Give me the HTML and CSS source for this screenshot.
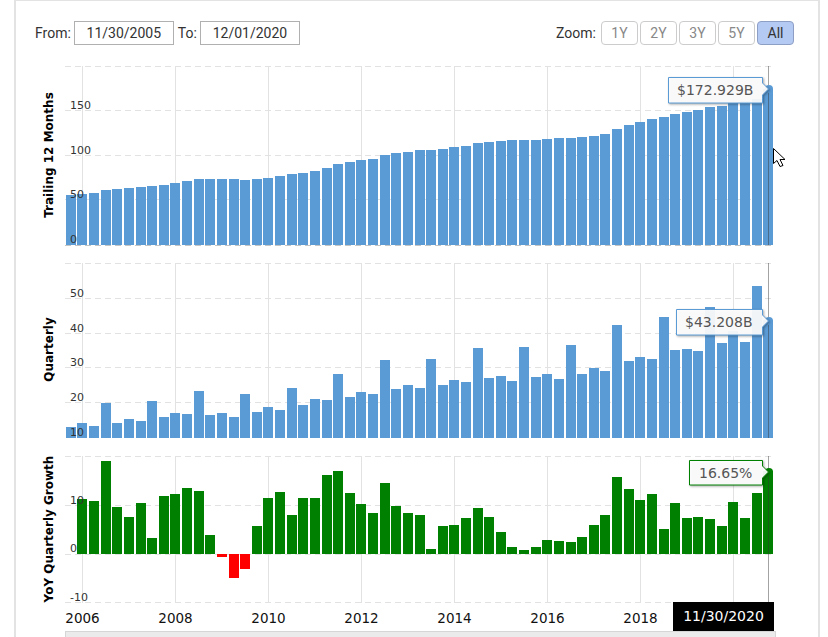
FILE: index.html
```html
<!DOCTYPE html>
<html>
<head>
    <meta charset="UTF-8">
    <title>Revenue Chart</title>
    <link rel="stylesheet" href="styles.css">
</head>
<body>
    <div class="card">
        <div class="toolbar">
            <div class="range">
                <label class="range-label">From:</label>
                <input class="range-input" type="text" value="11/30/2005">
                <label class="range-label">To:</label>
                <input class="range-input" type="text" value="12/01/2020">
            </div>
            <div class="zoom">
                <span class="zoom-label">Zoom:</span>
                <button class="zoom-btn">1Y</button>
                <button class="zoom-btn">2Y</button>
                <button class="zoom-btn">3Y</button>
                <button class="zoom-btn">5Y</button>
                <button class="zoom-btn active">All</button>
            </div>
        </div>
        <!-- viewBox uses page coordinates so the numbers read off the chart stay simple -->
        <svg id="chart" class="chart" viewBox="30 60 770 577" width="770" height="577"></svg>
    </div>
    <script src="chart.js"></script>
</body>
</html>
```

FILE: styles.css
```css
* {
    box-sizing: border-box;
}
body {
    margin: 0;
    background-color: #fff;
    font-family: Roboto, Arial, sans-serif;
    overflow: hidden;
}
.card {
    width: 806px;
    height: 637px;
    margin-left: 14px;
    padding: 20px 24px 0 19px;
    border: 1px solid #e3e3e3;
    border-width: 1px 2px 0 2px;
}
.toolbar {
    display: flex;
    justify-content: space-between;
    align-items: center;
    height: 24px;
    margin-bottom: 15px;
}
.range {
    display: flex;
    align-items: center;
}
.range-label {
    font-size: 14px;
    color: #333;
    margin-right: 3px;
}
.range-input {
    width: 100px;
    height: 24px;
    margin-right: 4px;
    padding: 0;
    border: 1px solid #b0b0b0;
    font-family: Roboto, Arial, sans-serif;
    font-size: 14px;
    color: #333;
    text-align: center;
}
.zoom {
    display: flex;
    align-items: center;
    gap: 2px;
}
.zoom-label {
    font-size: 14px;
    color: #333;
    margin-right: 3px;
}
.zoom-btn {
    width: 37px;
    height: 24px;
    padding: 0;
    border: 1px solid #ccc;
    border-radius: 4px;
    background-color: #fff;
    font-family: Roboto, Arial, sans-serif;
    font-size: 14px;
    color: #888;
}
.zoom-btn.active {
    background-color: #b5caf2;
    border-color: #8e9fc6;
    color: #333;
}
.chart {
    display: block;
    margin-left: -5px;
}

/* chart parts */
.grid-h {
    stroke: #e2e2e2;
    stroke-width: 1;
    stroke-dasharray: 6 4;
}
.grid-v {
    stroke: #e2e2e2;
    stroke-width: 1;
}
.baseline {
    stroke: #555;
    stroke-opacity: 0.35;
    stroke-width: 1;
    stroke-dasharray: 6 4;
}
.bar-blue, .marker-blue {
    fill: #5b9bd5;
}
.bar-green, .marker-green {
    fill: #008000;
}
.bar-red {
    fill: #f00;
}
.crosshair {
    stroke: #333;
    stroke-opacity: 0.45;
    stroke-width: 1;
}
.tick {
    font-family: "DejaVu Sans", sans-serif;
    font-size: 11px;
    fill: #333;
}
.axis-title {
    font-family: "DejaVu Sans", sans-serif;
    font-size: 12px;
    font-weight: bold;
    fill: #000;
    text-anchor: middle;
}
.year {
    font-family: "DejaVu Sans", sans-serif;
    font-size: 13.5px;
    fill: #111;
    text-anchor: middle;
}
.tip {
    fill: rgba(255, 255, 255, 0.93);
    stroke-width: 1;
    filter: drop-shadow(1px 1px 1px rgba(0, 0, 0, 0.35));
}
.tip-blue {
    stroke: #5b9bd5;
}
.tip-green {
    stroke: #008000;
}
.tip-text {
    font-family: "DejaVu Sans", sans-serif;
    font-size: 14px;
    fill: #555;
}
.date-box {
    fill: #000;
}
.date-text {
    font-family: "DejaVu Sans", sans-serif;
    font-size: 14px;
    fill: #fff;
    text-anchor: middle;
}
.navigator {
    fill: #ebebeb;
    stroke: #d6d6d6;
    stroke-width: 1;
}
.cursor {
    fill: #fff;
    stroke: #000;
    stroke-width: 1;
    stroke-linejoin: miter;
}
```

FILE: chart.js
```js
// left edge of every quarter's bar, shared by all three panels
var barX = [66, 77, 89, 101, 112, 124, 136, 147, 159, 170, 182, 194, 205, 217, 229, 240, 252, 263, 275, 287,
    298, 310, 322, 333, 345, 356, 368, 380, 391, 403, 415, 426, 438, 449, 461, 473, 484, 496, 507, 519,
    531, 542, 554, 566, 577, 589, 600, 612, 624, 635, 647, 659, 670, 682, 693, 705, 717, 728, 740, 752, 763];

// y of each bar's top
var trailing = [195, 194, 193, 190, 189, 188, 187, 186, 185, 183, 181, 179, 179, 179, 179, 180, 179, 178, 176, 174,
    173, 171, 168, 164, 162, 160, 159, 155, 153, 152, 150, 150, 149, 147, 146, 143, 142, 141, 140, 140,
    140, 139, 138, 138, 137, 136, 134, 129, 125, 122, 119, 117, 114, 112, 110, 107, 106, 103, 101, 99, 89];

var quarterly = [427, 423, 426, 403, 423, 419, 421, 401, 417, 413, 414, 391, 415, 413, 417, 394, 412, 407, 410, 388,
    405, 399, 400, 374, 397, 392, 394, 360, 389, 385, 388, 359, 385, 380, 382, 348, 378, 376, 381, 347,
    377, 374, 379, 345, 374, 368, 371, 325, 361, 357, 359, 317, 350, 349, 351, 307, 343, 331, 342, 286, 320];

// first quarter has no growth figure
var growth = [null, 499, 501, 461, 507, 517, 503, 538, 496, 494, 488, 491, 535, 557, 578, 569, 526, 498, 492, 515,
    498, 498, 475, 471, 493, 504, 513, 483, 506, 513, 515, 549, 526, 525, 518, 508, 517, 532, 547, 550,
    547, 540, 541, 542, 537, 525, 515, 477, 489, 500, 494, 529, 503, 518, 517, 519, 526, 502, 518, 493, 471];

var svg = document.getElementById('chart');
var yearLines = [82.5, 175.5, 268.5, 361.5, 454.5, 547.5, 640.5, 733.5];

function add(tag, attrs, text) {
    var el = document.createElementNS('http://www.w3.org/2000/svg', tag);
    for (var key in attrs) {
        el.setAttribute(key, attrs[key]);
    }
    if (text) {
        el.textContent = text;
    }
    svg.appendChild(el);
    return el;
}

function drawPanel(panel) {
    panel.grid.forEach(function(y) {
        add('line', { x1: 65, x2: 775, y1: y, y2: y, class: 'grid-h' });
    });
    yearLines.forEach(function(x) {
        add('line', { x1: x, x2: x, y1: panel.top, y2: panel.bottom, class: 'grid-v' });
    });

    panel.tops.forEach(function(top, i) {
        if (top === null) return;
        var negative = top > panel.zero;
        add('rect', {
            x: barX[i],
            y: negative ? panel.zero : top,
            width: 10,
            height: Math.abs(top - panel.zero),
            class: negative ? 'bar-red' : panel.barClass
        });
    });

    if (panel.baseline) {
        add('line', { x1: 65, x2: 775, y1: panel.baseline, y2: panel.baseline, class: 'baseline' });
    }

    panel.ticks.forEach(function(tick) {
        add('text', { x: 70, y: tick[1], class: 'tick' }, tick[0]);
    });

    add('text', {
        class: 'axis-title',
        transform: 'translate(52.5 ' + panel.titleY + ') rotate(-90)'
    }, panel.title);

    add('line', { x1: 768.5, x2: 768.5, y1: panel.top, y2: panel.bottom, class: 'crosshair' });
}

function drawTooltip(tip) {
    add('circle', { cx: 769, cy: tip.my, r: 4, class: 'marker-' + tip.color });
    var d = 'M' + tip.x + ' ' + tip.y0 + ' H762.5 V' + (tip.my - 6) +
        ' L768.5 ' + tip.my + ' L762.5 ' + (tip.my + 6) + ' V' + tip.y1 + ' H' + tip.x + ' Z';
    add('path', { d: d, class: 'tip tip-' + tip.color });
    add('text', { x: tip.textX, y: tip.baseline, class: 'tip-text' }, tip.text);
}

drawPanel({
    tops: trailing, zero: 245, top: 66, bottom: 245, barClass: 'bar-blue', baseline: 245.5,
    grid: [66.5, 110.5, 155.5, 199.5],
    ticks: [['150', 109], ['100', 154], ['50', 198], ['0', 243]],
    title: 'Trailing 12 Months', titleY: 155
});
drawPanel({
    tops: quarterly, zero: 438, top: 263, bottom: 438, barClass: 'bar-blue',
    grid: [263.5, 298.5, 333.5, 367.5, 402.5],
    ticks: [['50', 297], ['40', 332], ['30', 366], ['20', 401], ['10', 436]],
    title: 'Quarterly', titleY: 349.5
});
drawPanel({
    tops: growth, zero: 554, top: 456, bottom: 603, barClass: 'bar-green',
    grid: [456.5, 505.5, 554.5, 602.5],
    ticks: [['10', 504], ['0', 552], ['-10', 601]],
    title: 'YoY Quarterly Growth', titleY: 529
});

['2006', '2008', '2010', '2012', '2014', '2016', '2018'].forEach(function(year, i) {
    add('text', { x: yearLines[i], y: 623, class: 'year' }, year);
});

add('rect', { x: 65.5, y: 631.5, width: 710, height: 10, class: 'navigator' });

drawTooltip({ x: 668.5, y0: 77.5, y1: 103, my: 89, color: 'blue', text: '$172.929B', textX: 677, baseline: 95 });
drawTooltip({ x: 676.5, y0: 309.5, y1: 335, my: 321, color: 'blue', text: '$43.208B', textX: 685, baseline: 327 });
drawTooltip({ x: 689.5, y0: 460.5, y1: 485, my: 472, color: 'green', text: '16.65%', textX: 699, baseline: 478 });

add('rect', { x: 673, y: 602, width: 101, height: 29, class: 'date-box' });
add('text', { x: 723.5, y: 621, class: 'date-text' }, '11/30/2020');

// mouse pointer caught in the screenshot
add('path', { d: 'M773.5 148.5 V163.5 L777 160.5 L780 166.5 L783 165.5 L780 159.5 L785 159.5 Z', class: 'cursor' });
```
